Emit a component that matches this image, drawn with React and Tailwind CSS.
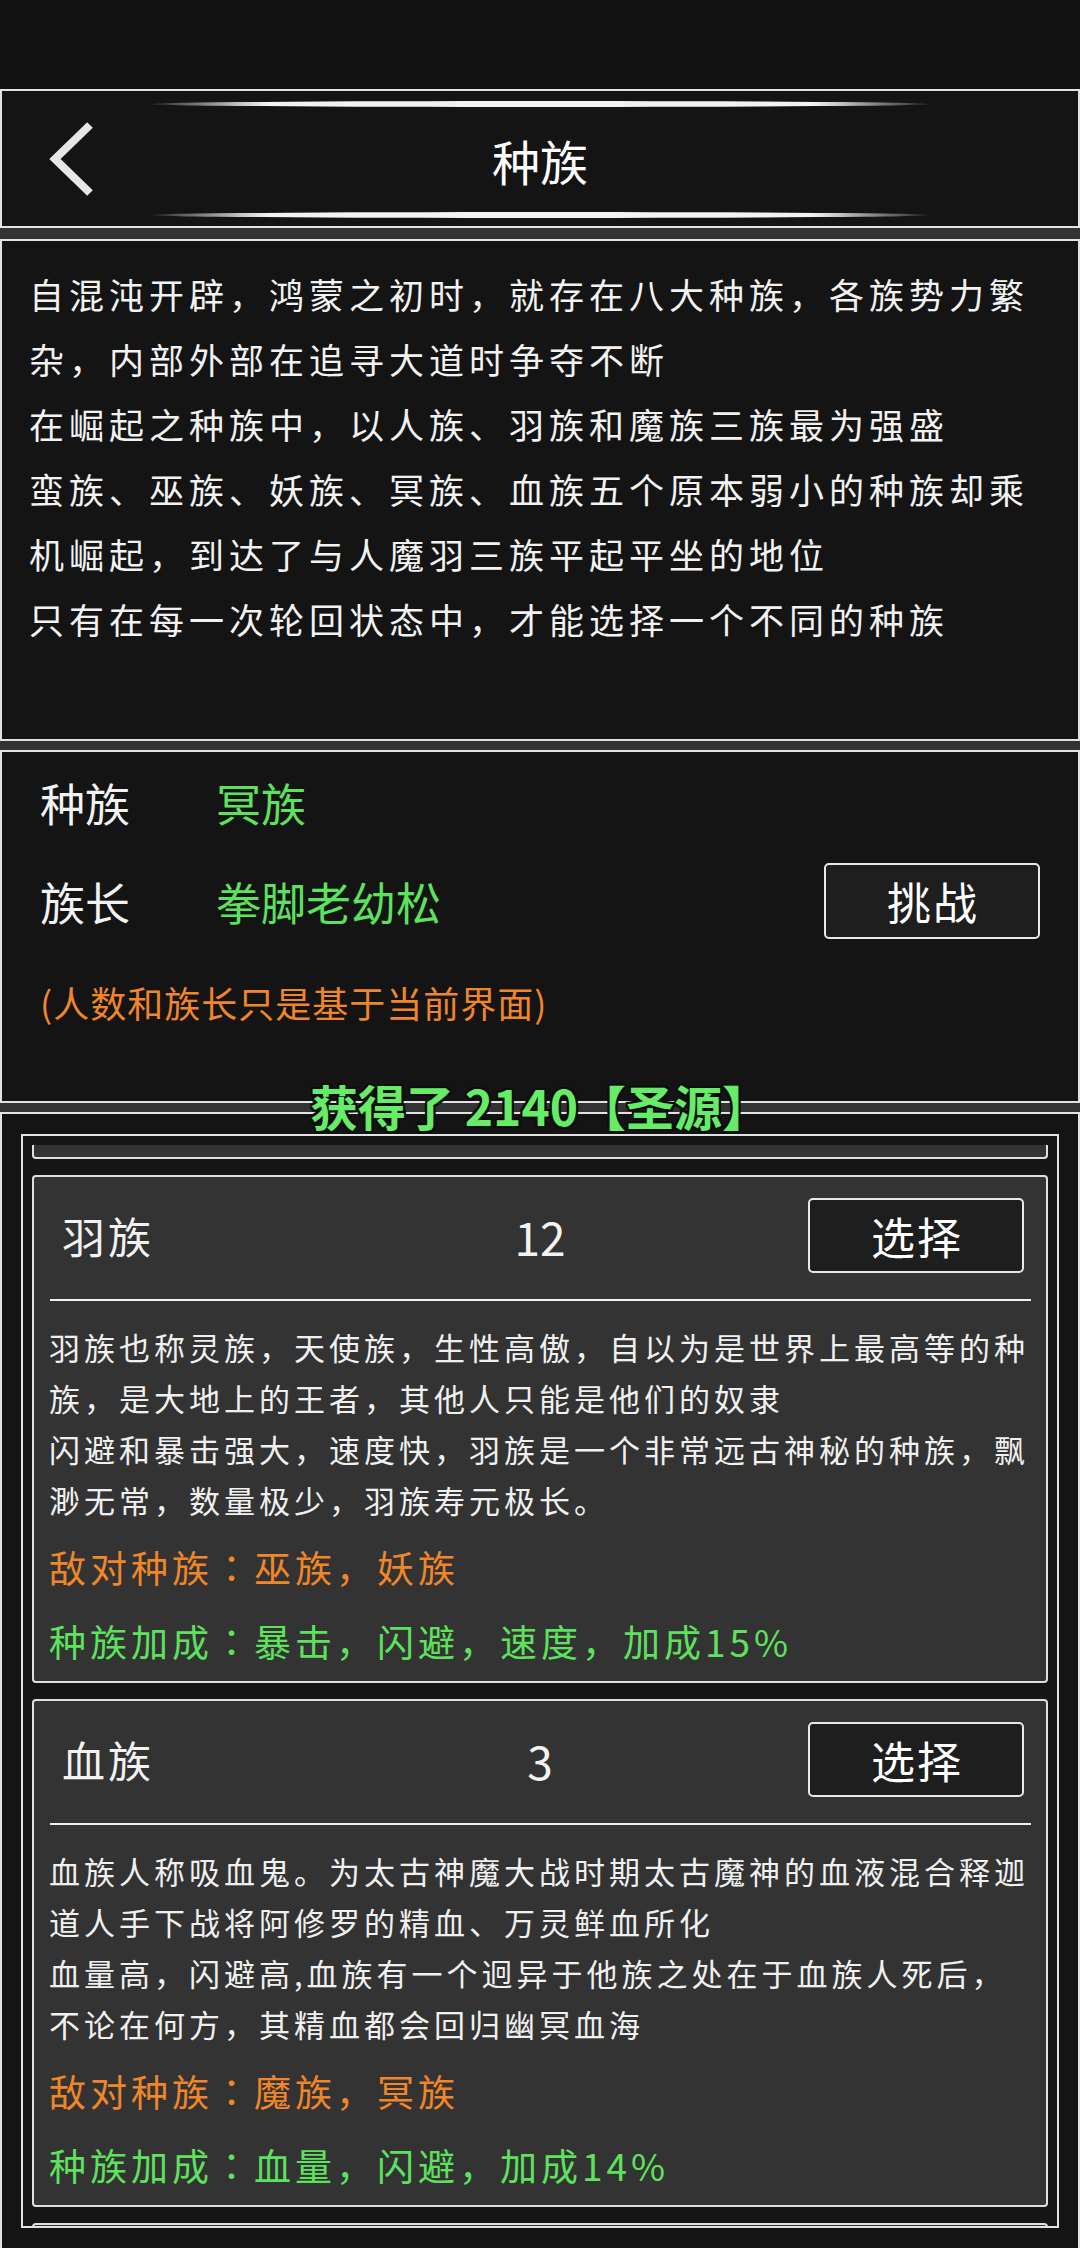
import React from 'react';

const font = "font-['Noto_Sans_CJK_SC','Noto_Sans',sans-serif]";

const races = [
  {
    name: '羽族',
    count: 12,
    desc: [
      '羽族也称灵族，天使族，生性高傲，自以为是世界上最高等的种族，是大地上的王者，其他人只能是他们的奴隶',
      '闪避和暴击强大，速度快，羽族是一个非常远古神秘的种族，飘渺无常，数量极少，羽族寿元极长。',
    ],
    enemy: '巫族，妖族',
    bonus: '暴击，闪避，速度，加成15%',
  },
  {
    name: '血族',
    count: 3,
    desc: [
      '血族人称吸血鬼。为太古神魔大战时期太古魔神的血液混合释迦道人手下战将阿修罗的精血、万灵鲜血所化',
      '血量高，闪避高,血族有一个迥异于他族之处在于血族人死后，不论在何方，其精血都会回归幽冥血海',
    ],
    enemy: '魔族，冥族',
    bonus: '血量，闪避，加成14%',
  },
];

const intro = [
  '自混沌开辟，鸿蒙之初时，就存在八大种族，各族势力繁杂，内部外部在追寻大道时争夺不断',
  '在崛起之种族中，以人族、羽族和魔族三族最为强盛',
  '蛮族、巫族、妖族、冥族、血族五个原本弱小的种族却乘机崛起，到达了与人魔羽三族平起平坐的地位',
  '只有在每一次轮回状态中，才能选择一个不同的种族',
];

function GlowLine() {
  return (
    <div className="h-[6px] w-[780px] rounded-[50%] bg-[linear-gradient(90deg,rgba(255,255,255,0.08)_0%,#f2f2f2_15%,#f2f2f2_85%,rgba(255,255,255,0.08)_100%)]" />
  );
}

// centred full-width colon, as in the game font
const Colon = () => <span className="font-['Noto_Sans_CJK_TC',sans-serif]">：</span>;

function RaceCard({ race }) {
  return (
    <div className="shrink-0 rounded-[4px] border-2 border-[#dedede] bg-[#333333] pt-[21px] pb-[15px]">
      <div className="grid grid-cols-[1fr_auto_1fr] items-center pl-[28px] pr-[22px]">
        <span className="text-[43px] leading-none tracking-[3px] text-[#f2f2f2]">{race.name}</span>
        <span className="mr-[6px] text-[46px] leading-none text-[#f2f2f2]">{race.count}</span>
        <button className="flex h-[75px] w-[216px] items-center justify-center justify-self-end rounded-[5px] border-2 border-[#e8e8e8] bg-[#1e1e1e] pl-[2px] text-[44px] leading-none tracking-[2px] text-white">
          选择
        </button>
      </div>
      <div className="mt-[26px] ml-[16px] mr-[15px] h-[2px] bg-[#efefef]" />
      <div className="mt-[20px] ml-[15px] w-[988px] text-[31px] leading-[51px] tracking-[4px] text-[#f0f0f0]">
        {race.desc.map((p) => (
          <p key={p}>{p}</p>
        ))}
      </div>
      <p className="mt-[17px] ml-[15px] text-[37px] leading-[50px] tracking-[4px] text-[#f0862a]">
        敌对种族<Colon />{race.enemy}
      </p>
      <p className="mt-[24px] ml-[15px] text-[37px] leading-[50px] tracking-[4px] text-[#5ee25e]">
        种族加成<Colon />{race.bonus}
      </p>
    </div>
  );
}

export default function App() {
  return (
    <div className={`relative flex h-[2248px] w-[1080px] flex-col overflow-hidden bg-[#333333] ${font}`}>
      {/* status bar */}
      <div className="h-[89px] shrink-0 bg-[#121212]" />

      {/* header */}
      <div className="flex h-[139px] shrink-0 flex-col items-center border-2 border-[#e2e2e2] bg-[#141414]">
        <div className="mt-[10px]">
          <GlowLine />
        </div>
        <div className="relative flex w-full flex-1 items-center justify-center">
          <svg className="absolute left-[38px] top-[8px]" width="60" height="90" viewBox="0 0 60 90">
            <polyline points="50,10 15,44 50,78" fill="none" stroke="#e6e6e6" strokeWidth="8" strokeLinejoin="miter" />
          </svg>
          <span className="text-[48px] leading-none text-white">种族</span>
        </div>
        <div className="mb-[8px]">
          <GlowLine />
        </div>
      </div>

      {/* intro */}
      <div className="mt-[11px] h-[502px] shrink-0 border-2 border-[#e2e2e2] bg-[#141414] pt-[20px] pl-[27px] pr-[20px] text-[35px] leading-[65px] tracking-[5px] text-[#f2f2f2]">
        {intro.map((p) => (
          <p key={p}>{p}</p>
        ))}
      </div>

      {/* current race */}
      <div className="mt-[9px] h-[353px] shrink-0 border-2 border-[#e2e2e2] bg-[#141414] px-[38px] pt-[20px]">
        <div className="flex h-[60px] items-center text-[45px] leading-none">
          <span className="w-[176px] text-[#f2f2f2]">种族</span>
          <span className="text-[#5ee25e]">冥族</span>
        </div>
        <div className="mt-[31px] flex h-[76px] items-center text-[45px] leading-none">
          <span className="w-[176px] text-[#f2f2f2]">族长</span>
          <span className="flex-1 text-[#5ee25e]">拳脚老幼松</span>
          <button className="flex h-[76px] w-[216px] items-center justify-center rounded-[5px] border-2 border-[#e8e8e8] bg-[#1e1e1e] pl-[2px] text-[44px] leading-none tracking-[2px] text-white">
            挑战
          </button>
        </div>
        <p className="mt-[41px] text-[36px] leading-[44px] tracking-[1px] text-[#f0862a]">(人数和族长只是基于当前界面)</p>
      </div>

      {/* race list */}
      <div className="mt-[9px] h-[1136px] shrink-0 border-2 border-b-0 border-[#e2e2e2] bg-[#141414] pt-[20px] pl-[19px] pr-[19px]">
        <div className="flex h-[1094px] flex-col gap-[16px] overflow-hidden border-2 border-[#e2e2e2] bg-[#151515] px-[9px] pt-[9px]">
          <div className="h-[14px] shrink-0 rounded-b-[4px] border-2 border-t-0 border-[#dedede] bg-[#333333]" />
          {races.map((r) => (
            <RaceCard key={r.name} race={r} />
          ))}
          <div className="h-[400px] shrink-0 rounded-[4px] border-2 border-[#dedede] bg-[#333333]" />
        </div>
      </div>

      {/* reward toast */}
      <div className="absolute left-0 right-0 top-[1081px] text-center text-[48px] font-bold leading-none text-[#66ec66] [text-shadow:2px_0_0_#0c0c0c,-2px_0_0_#0c0c0c,0_2px_0_#0c0c0c,0_-2px_0_#0c0c0c,2px_2px_0_#0c0c0c,-2px_-2px_0_#0c0c0c,2px_-2px_0_#0c0c0c,-2px_2px_0_#0c0c0c]">
        获得了 2140【圣源】
      </div>
    </div>
  );
}
